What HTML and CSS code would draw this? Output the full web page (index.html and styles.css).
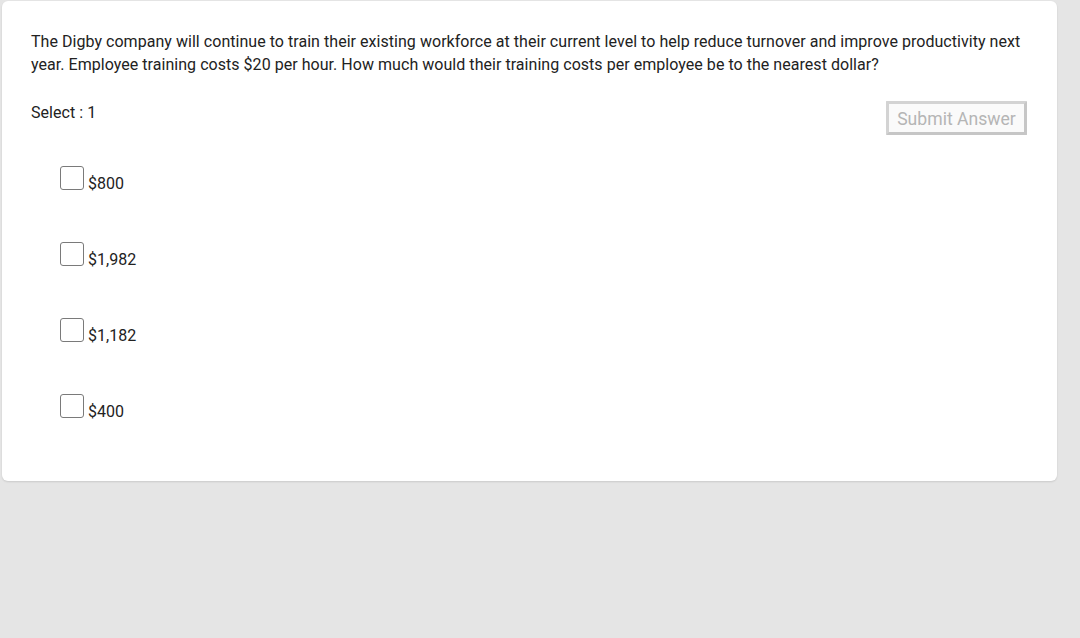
FILE: index.html
```html
<!DOCTYPE html>
<html>
<head>
<meta charset="utf-8">
<link rel="stylesheet" href="styles.css">
</head>
<body>
<div class="card">
  <p class="question">The Digby company will continue to train their existing workforce at their current level to help reduce turnover and improve productivity next year. Employee training costs $20 per hour. How much would their training costs per employee be to the nearest dollar?</p>
  <div class="toolbar">
    <span class="select">Select : 1</span>
    <button class="submit">Submit Answer</button>
  </div>
  <div class="options">
    <label class="option"><span class="box"></span><span class="label">$800</span></label>
    <label class="option"><span class="box"></span><span class="label">$1,982</span></label>
    <label class="option"><span class="box"></span><span class="label">$1,182</span></label>
    <label class="option"><span class="box"></span><span class="label">$400</span></label>
  </div>
</div>
</body>
</html>
```

FILE: styles.css
```css
html, body {
  margin: 0;
  padding: 0;
  background: #e5e5e5;
  height: 100%;
}
body {
  font-family: Roboto, "Liberation Sans", sans-serif;
  font-size: 16px;
  line-height: 23px;
  color: #222;
  letter-spacing: 0.04px;
  padding-top: 1px;
  box-sizing: border-box;
}
.card {
  margin-left: 2px;
  width: 1055px;
  box-sizing: border-box;
  background: #fff;
  border-radius: 6px;
  box-shadow: 0 1px 2px rgba(0,0,0,0.12);
  padding: 29px 30px 58px 29px;
}
.question {
  margin: 0;
}
.toolbar {
  margin-top: 25px;
  display: flex;
  justify-content: space-between;
  align-items: flex-start;
}
.submit {
  font-family: Roboto, "Liberation Sans", sans-serif;
  font-size: 17.6px;
  line-height: 24px;
  letter-spacing: 0;
  color: #b5b5b5;
  background: #fafafa;
  border: 3px solid #d3d3d3;
  border-bottom-color: #c6c6c6;
  border-right-color: #c6c6c6;
  border-radius: 1px;
  padding: 2px 0 1px 0;
  width: 141px;
  height: 34px;
  box-sizing: border-box;
  margin: 0;
}
.options {
  margin-top: 30px;
  margin-left: 29px;
  display: flex;
  flex-direction: column;
  gap: 46px;
}
.option {
  display: flex;
  align-items: baseline;
  gap: 4px;
}
.box {
  width: 24px;
  height: 24px;
  box-sizing: border-box;
  border: 1.5px solid #7a7a7a;
  border-radius: 3px;
  background: #fff;
  position: relative;
  top: 1px;
}
```
